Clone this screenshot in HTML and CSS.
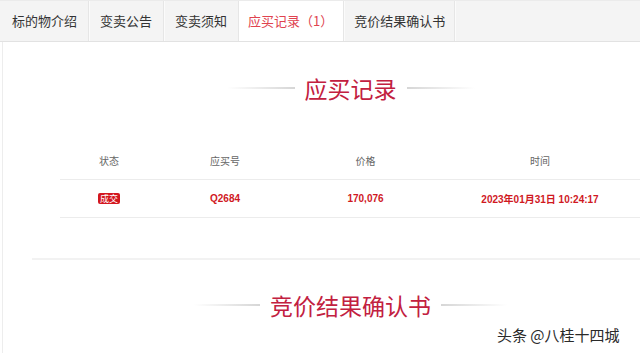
FILE: index.html
```html
<!DOCTYPE html>
<html lang="zh-CN">
<head>
    <meta charset="UTF-8">
    <title>应买记录</title>
    <link rel="stylesheet" href="styles.css">
</head>
<body>
    <div class="tabs">
        <div class="tab">标的物介绍</div>
        <div class="tab">变卖公告</div>
        <div class="tab">变卖须知</div>
        <div class="tab active">应买记录（1）</div>
        <div class="tab">竞价结果确认书</div>
    </div>

    <div class="content">
        <!-- 应买记录 -->
        <div class="sec-title">
            <span class="line left"></span>
            <h2>应买记录</h2>
            <span class="line right"></span>
        </div>

        <div class="record-table">
            <div class="row head">
                <div>状态</div>
                <div>应买号</div>
                <div>价格</div>
                <div>时间</div>
            </div>
            <div class="row data">
                <div><span class="badge">成交</span></div>
                <div>Q2684</div>
                <div>170,076</div>
                <div>2023年01月31日 10:24:17</div>
            </div>
        </div>

        <div class="divider"></div>

        <!-- 竞价结果确认书 -->
        <div class="sec-title second">
            <span class="line left"></span>
            <h2>竞价结果确认书</h2>
            <span class="line right"></span>
        </div>
    </div>

    <div class="watermark">头条 @八桂十四城</div>
</body>
</html>
```

FILE: styles.css
```css
body {
    margin: 0;
    padding: 0;
    height: 354px;
    overflow: hidden;
    position: relative;
    background: #fff;
    font-family: "Noto Sans CJK SC", "Liberation Sans", sans-serif;
    color: #333;
}

/* 顶部标签 */
.tabs {
    display: flex;
    height: 40px;
    background: #f4f4f4;
    border-top: 1px solid #ebebeb;
    border-bottom: 1px solid #e2e2e2;
}
.tab {
    padding: 0 11px;
    line-height: 39px;
    font-size: 13px;
    color: #333;
    border-right: 1px solid #e6e6e6;
    box-shadow: 1px 0 0 #fbfbfb;
    white-space: nowrap;
}
.tab:first-child {
    padding-left: 12px;
}
.tab:last-child {
    padding: 0 9px 0 10px;
}
.tab.active {
    background: #fff;
    color: #e0434f;
    padding: 0 10px 0 9px;
}

.content {
    margin-left: 2px;
    border-left: 1px solid #ededed;
    padding-top: 31px;
    height: 280px;
}

/* 标题 */
.sec-title {
    display: flex;
    align-items: center;
    justify-content: center;
    height: 30px;
    padding-left: 58px;
}
.sec-title h2 {
    margin: 0 10px;
    font-size: 23px;
    font-weight: normal;
    line-height: 30px;
    color: #c22040;
}
.sec-title .line {
    width: 68px;
    height: 2px;
}
.sec-title .left {
    background: linear-gradient(to right, rgba(215,215,215,0), #d6d6d6);
}
.sec-title .right {
    background: linear-gradient(to right, #d6d6d6, rgba(215,215,215,0));
}
.sec-title.second {
    margin-top: 30px;
}
.sec-title.second .line {
    width: 66px;
}

/* 应买记录表 */
.record-table {
    margin: 38px 0 0 57px;
}
.row {
    display: grid;
    grid-template-columns: 98px 134px 147px 1fr;
    align-items: center;
    text-align: center;
    border-bottom: 1px solid #ececec;
}
.row.head {
    height: 38px;
    font-size: 10px;
    color: #666;
}
.row.data {
    height: 37px;
    font-family: "Liberation Sans", "Noto Sans CJK SC", sans-serif;
    font-size: 10px;
    font-weight: bold;
    color: #d0191f;
}
.row > div:last-child {
    padding-left: 1px;
}
.badge {
    display: inline-block;
    padding: 0 2px;
    line-height: 11px;
    font-size: 9px;
    font-weight: normal;
    color: #fff;
    background: #d3171f;
    border-radius: 2px;
    font-family: "Noto Sans CJK SC", sans-serif;
}

.divider {
    margin: 40px 0 0 29px;
    height: 2px;
    background: #f2f2f2;
}

/* 水印 */
.watermark {
    position: absolute;
    left: 497px;
    top: 324px;
    font-size: 15px;
    color: #2a2a2a;
    text-shadow: 0 0 2px #fff;
}
```
